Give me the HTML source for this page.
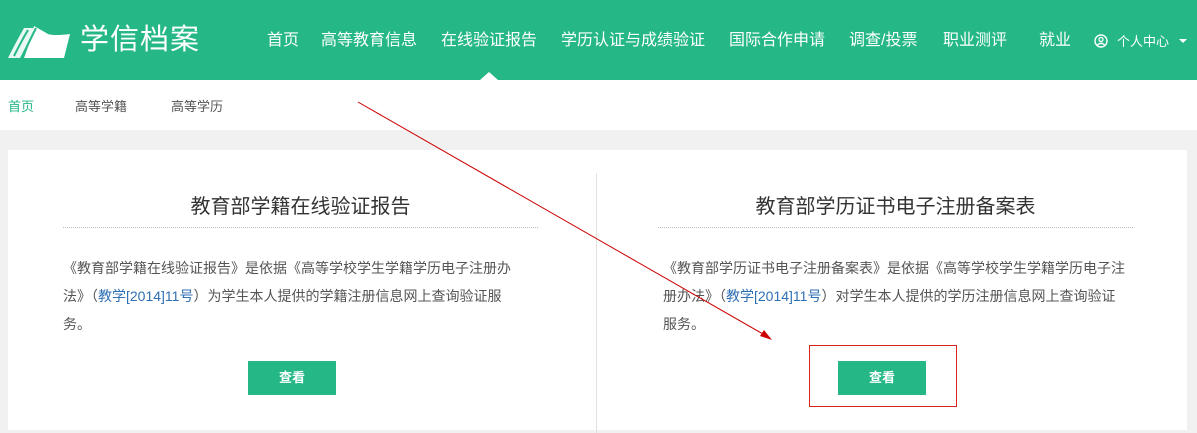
<!DOCTYPE html>
<html><head><meta charset="utf-8"><style>
*{margin:0;padding:0;box-sizing:border-box}
body{width:1197px;height:416px;overflow:hidden;background:#f1f1f1;font-family:"Liberation Sans","Microsoft YaHei","Noto Sans CJK SC",sans-serif;position:relative}
.hd{position:absolute;left:0;top:0;width:1197px;height:80px;background:#25b886;color:#fff}
.hd span{position:absolute;top:31px;font-size:16px;line-height:20px;white-space:nowrap}
.logo{position:absolute;left:80px;top:22px;font-size:29px;line-height:36px;color:#fff;letter-spacing:1px}
.sub{position:absolute;top:80px;left:0;width:1197px;height:50px;background:#fff}
.sub span{position:absolute;top:16px;font-size:13px;color:#555}
.card{position:absolute;left:8px;top:150px;width:1179px;height:280px;background:#fff}
.t{position:absolute;font-size:20px;color:#333;text-align:center;width:475px;top:40px}
.dot{position:absolute;top:77px;height:0;border-top:1px dotted #bbb;width:475px}
.p{position:absolute;top:104px;font-size:14px;line-height:28px;color:#555;width:464px}
.p a{color:#2f6fb4;text-decoration:none}
.btn{position:absolute;top:211px;width:88px;height:34px;background:#25b886;color:#fff;font-size:13px;text-align:center;line-height:34px;font-weight:bold}
</style></head><body>
<div class="hd">
<svg style="position:absolute;left:8px;top:22px" width="62" height="38" viewBox="0 0 62 38"><path d="M16 6 L28 6 Q20 20 12 36 L0 36 Q8 20 16 6Z" fill="#fff" opacity=".9"/><path d="M20 8 C14 18 10 26 6 34" stroke="#25b886" stroke-width="2" fill="none"/><path d="M26 4 L40 12 Q46 14 62 12 L56 36 L16 36 Q22 20 26 4Z" fill="#fff"/><path d="M28 6 C22 18 18 26 14 36" stroke="#25b886" stroke-width="2" fill="none"/></svg>
<div class="logo">学信档案</div>
<span style="left:267px">首页</span>
<span style="left:321px">高等教育信息</span>
<span style="left:441px">在线验证报告</span>
<span style="left:561px">学历认证与成绩验证</span>
<span style="left:729px">国际合作申请</span>
<span style="left:849px">调查/投票</span>
<span style="left:943px">职业测评</span>
<span style="left:1039px">就业</span>
<svg style="position:absolute;left:1094px;top:34px" width="14" height="14" viewBox="0 0 14 14"><circle cx="7" cy="7" r="6" stroke="#fff" stroke-width="1.4" fill="none"/><circle cx="7" cy="5.5" r="2" stroke="#fff" stroke-width="1.3" fill="none"/><path d="M3.5 11 Q7 7.5 10.5 11" stroke="#fff" stroke-width="1.3" fill="none"/></svg>
<span style="left:1117px;font-size:13px;top:32px">个人中心</span>
<svg style="position:absolute;left:1179px;top:39px" width="8" height="5"><path d="M0 0H8L4 4Z" fill="#fff"/></svg>
<svg style="position:absolute;left:480px;top:72px" width="18" height="8"><path d="M0 8L9 0L18 8Z" fill="#fff"/></svg>
</div>
<div class="sub"><span style="left:8px;color:#25b886">首页</span><span style="left:75px">高等学籍</span><span style="left:171px">高等学历</span></div>
<div class="card">
<div style="position:absolute;left:588px;top:23px;width:1px;height:260px;background:#e2e2e2"></div>
<div class="t" style="left:55px">教育部学籍在线验证报告</div>
<div class="dot" style="left:55px"></div>
<div class="p" style="left:55px">《教育部学籍在线验证报告》是依据《高等学校学生学籍学历电子注册办法》（<a>教学[2014]11号</a>）为学生本人提供的学籍注册信息网上查询验证服务。</div>
<div class="btn" style="left:240px">查看</div>
<div class="t" style="left:650px">教育部学历证书电子注册备案表</div>
<div class="dot" style="left:650px"></div>
<div class="p" style="left:655px">《教育部学历证书电子注册备案表》是依据《高等学校学生学籍学历电子注册办法》（<a>教学[2014]11号</a>）对学生本人提供的学历注册信息网上查询验证服务。</div>
<div class="btn" style="left:830px">查看</div>
</div>
<div style="position:absolute;left:809px;top:345px;width:148px;height:62px;border:1px solid #d22"></div>
<svg style="position:absolute;left:0;top:0" width="1197" height="416"><line x1="358" y1="102" x2="770" y2="338" stroke="#c00" stroke-width="1"/><path d="M772 340 L760 336 L764 330Z" fill="#c00"/></svg>
</body></html>
